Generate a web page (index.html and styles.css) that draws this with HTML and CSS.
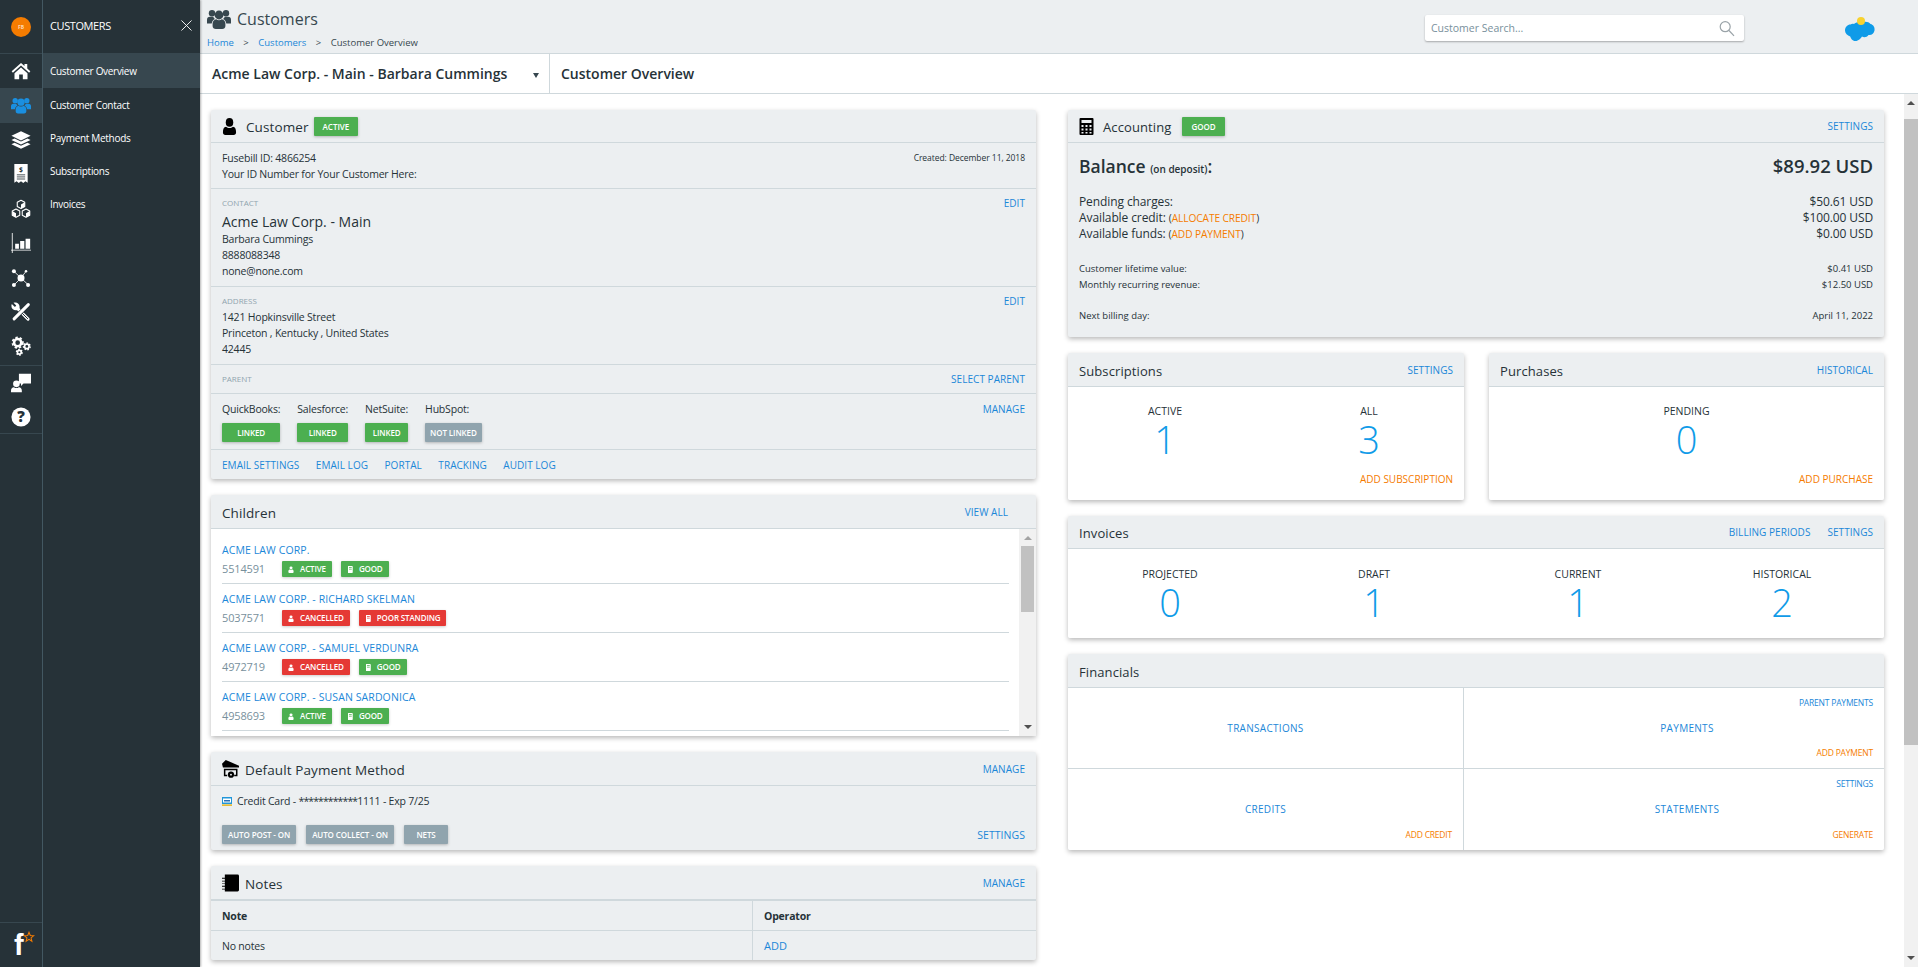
FILE: index.html
```html
<!DOCTYPE html>
<html lang="en">
<head>
<meta charset="utf-8">
<title>Customer Overview</title>
<link rel="stylesheet" href="styles.css">
</head>
<body>
<svg class="defs" width="0" height="0" aria-hidden="true">
  <symbol id="i-users" viewBox="0 0 24 20">
    <circle cx="5" cy="4.2" r="3.2"/><circle cx="19" cy="4.2" r="3.2"/><circle cx="12" cy="6" r="4.4"/>
    <path d="M0 14.5V11c0-2 1-3.2 3-3.2h3.2c.5.9 1 1.6 1.7 2.2-1.8.9-2.9 2.5-3.2 4.5zM24 14.5V11c0-2-1-3.2-3-3.2h-3.2c-.5.9-1 1.6-1.7 2.2 1.8.9 2.9 2.5 3.2 4.5z"/>
    <path d="M5.6 17v-2.2c0-2.6 1.6-4.3 3.6-4.6.8.7 1.8 1.1 2.8 1.1s2-.4 2.8-1.1c2 .3 3.6 2 3.6 4.6V17c0 1.8-1.4 3-3.2 3H8.800c-1.800 0-3.200-1.200-3.200-3z"/>
  </symbol>
  <symbol id="i-user" viewBox="0 0 16 18">
    <ellipse cx="8" cy="4.600" rx="4" ry="4.600"/>
    <path d="M1 15.500c0-3.600.8-6 3.300-6.300C5.300 10 6.600 10.500 8 10.500s2.700-.5 3.700-1.300c2.500.3 3.300 2.700 3.300 6.300 0 1.500-1 2.500-2.600 2.500H3.600C2 18 1 17 1 15.500z"/>
  </symbol>
  <symbol id="i-book" viewBox="0 0 12 14">
    <path fill-rule="evenodd" d="M2 0h8a1.500 1.500 0 0 1 1.500 1.500v11A1.500 1.500 0 0 1 10 14H2zM4 2.500v1.500h5.500V2.500zM4 5.500V7h5.500V5.500z"/>
  </symbol>
</svg>

<div class="app">
  <nav class="rail">
    <div class="rail-logo"><span class="logo-dot">FB</span></div>
    <div class="rail-group">
      <a class="rail-item"><svg class="ri" viewBox="0 0 24 24"><path d="M12 2.500.8 12.300l1.500 1.700L12 5.500l9.700 8.500 1.500-1.700L19.500 9V3.500h-3.300v2.600zM4.200 14.600V22h5.600v-5.800h4.400V22h5.600v-7.400L12 7.700z"/></svg></a>
      <a class="rail-item is-active"><svg class="ri ri-blue" viewBox="0 0 24 20"><use href="#i-users"/></svg></a>
      <a class="rail-item"><svg class="ri" viewBox="0 0 24 24"><path d="M12 1.500 23.500 7 12 12.500.5 7zM4.300 10.200.5 12 12 17.500 23.500 12l-3.800-1.800L12 13.900zM4.300 15.200.5 17 12 22.500 23.500 17l-3.800-1.800L12 18.900z"/></svg></a>
      <a class="rail-item"><svg class="ri" viewBox="0 0 24 24"><path d="M4 0h16v22.500l-2.700-1.700-2.600 1.900-2.700-1.900-2.700 1.900-2.600-1.900L4 22.500z"/><text class="receipt-sign" x="12" y="9.500">$</text><path class="dark-stroke" d="M7 13h10M7 15.500h10M7 18h10"/></svg></a>
      <a class="rail-item"><svg class="ri" viewBox="0 0 24 24"><path class="cube" d="M12 1.500 16.500 4v5L12 11.500 7.500 9V4z"/><path d="M12 6.500 16.500 4v5L12 11.500z"/><path class="cube" d="M6 12 10.500 14.500v5L6 22 1.500 19.500v-5z"/><path d="M1.500 14.500 6 17v5l-4.500-2.500z"/><path class="cube" d="M18 12 22.500 14.500v5L18 22 13.500 19.500v-5z"/><path d="M18 17l4.500-2.500v5L18 22z"/></svg></a>
      <a class="rail-item"><svg class="ri" viewBox="0 0 24 24"><path d="M1 0h1v20h22v1H2v3H1v-3H0v-1h1z"/><path d="M5 13h4.500v6H5zM11 9.500h5V19h-5zM17.500 7H23v12h-5.500z"/></svg></a>
      <a class="rail-item"><svg class="ri" viewBox="0 0 24 24"><path class="line-white" d="M12 12 3.500 4M12 12l6-8M12 12l-8 8M12 12l8.500 8"/><circle cx="12" cy="12" r="4.200"/><circle cx="3.500" cy="4" r="2.400"/><circle cx="18" cy="4" r="1.500"/><circle cx="3.500" cy="20.500" r="2.400"/><circle cx="20.500" cy="20.500" r="2.400"/></svg></a>
      <a class="rail-item"><svg class="ri" viewBox="0 0 24 24"><path d="M1 2.500 4.700 6 6.300 4.300 3 1C6.500-.5 10.800 1.800 10.300 6.500L9.500 9 6.800 10C2 10.500-.7 6.200 1 2.500z"/><path class="tool-bar" d="M8 8 20.500 20.500"/><path class="tool-inner" d="M13 13 20.300 20.300"/><path class="tool-gap" d="M21 3 3.500 20.500"/><path class="tool-blade" d="M20.800 3.200 3.700 20.300"/></svg></a>
      <a class="rail-item"><svg class="ri" viewBox="0 0 24 24"><circle class="gear-ring" cx="8" cy="8" r="4.300"/><circle class="gear-teeth" cx="8" cy="8" r="6.300"/><circle class="gear-ring-sm" cx="19" cy="12.500" r="2.700"/><circle class="gear-teeth-sm" cx="19" cy="12.500" r="4.100"/><circle class="gear-ring-sm" cx="10" cy="19.500" r="2.300"/><circle class="gear-teeth-sm" cx="10" cy="19.500" r="3.500"/></svg></a>
    </div>
    <div class="rail-group rail-group-help">
      <a class="rail-item"><svg class="ri" viewBox="0 0 24 24"><path d="M9.500 1h14.500v11.500h-9L12 15.500v-3H9.500z"/><circle cx="6.500" cy="13" r="4"/><path d="M0 23v-1.700c0-2.700 1.500-4.300 3.500-4.300 1 .7 2 1 3 1s2-.3 3-1c2 0 3.500 1.600 3.500 4.300V23z"/></svg></a>
      <a class="rail-item"><svg class="ri" viewBox="0 0 24 24"><circle cx="12" cy="12" r="11.500"/><text class="help-q" x="12" y="18.500">?</text></svg></a>
    </div>
    <div class="rail-brand">
      <span class="brand-f">f</span>
      <svg class="brand-star" viewBox="0 0 14 14"><path d="M7 1.500 8.500 5.300l4 .2-3.100 2.600 1 3.900L7 9.800 3.600 12l1-3.900L1.500 5.500l4-.2z"/></svg>
    </div>
  </nav>

  <aside class="panel">
    <div class="panel-head"><span>CUSTOMERS</span>
      <svg class="panel-close" viewBox="0 0 12 12"><path d="M.5.500l11 11M11.500.500l-11 11"/></svg>
    </div>
    <a class="panel-item is-active">Customer Overview</a>
    <a class="panel-item">Customer Contact</a>
    <a class="panel-item">Payment Methods</a>
    <a class="panel-item">Subscriptions</a>
    <a class="panel-item">Invoices</a>
  </aside>

  <div class="main">
    <header class="topbar">
      <div class="crumbs-block">
        <div class="page-title"><svg class="title-icon" viewBox="0 0 24 20"><use href="#i-users"/></svg><span>Customers</span></div>
        <div class="crumbs"><a>Home</a><span class="sep">&gt;</span><a>Customers</a><span class="sep">&gt;</span><span>Customer Overview</span></div>
      </div>
      <div class="search"><span>Customer Search...</span>
        <svg class="search-icon" viewBox="0 0 16 16"><circle cx="6.200" cy="6.200" r="5"/><path d="m10 10 5 5.300"/></svg>
      </div>
      <svg class="cloud" viewBox="0 0 30 24"><path class="cloud-blue" d="M9 7c2-2 5-2.500 7.500-1 3-2 7-1.500 9 1 3 .7 4.500 3.500 4 6.500-.4 3-3 5-6 4.500-1.500 2.200-4.500 3-6.500 1.500-1.200 1.700-3.500 4.500-6.500 4.500-3.500 0-4.500-2.800-5.300-4.500C2.500 18.500 0 16.500 0 13.500 0 9.800 3 7.300 5.500 7.500 6.700 6.500 8 6.500 9 7z"/><circle class="cloud-sun" cx="16" cy="4" r="4"/></svg>
    </header>

    <div class="subbar">
      <div class="cust-select"><span>Acme Law Corp. - Main - Barbara Cummings</span><i class="caret"></i></div>
      <div class="sub-title">Customer Overview</div>
    </div>

    <div class="body-row">
      <div class="content">
        <div class="column col-l">
          <section class="card">
            <div class="card-head"><div class="head-left">
              <svg class="head-icon" viewBox="0 0 16 18"><use href="#i-user"/></svg>
              <h2>Customer</h2><span class="tag tag-green">ACTIVE</span></div></div>
            <div class="sec sec-id">
              <div class="between"><span>Fusebill ID: 4866254</span><span class="created">Created: December 11, 2018</span></div>
              <div>Your ID Number for Your Customer Here:</div>
            </div>
            <div class="sec sec-contact">
              <div class="between"><span class="eyebrow">CONTACT</span><a class="link">EDIT</a></div>
              <div class="contact-name">Acme Law Corp. - Main</div>
              <div>Barbara Cummings</div><div>8888088348</div><div>none@none.com</div>
            </div>
            <div class="sec sec-address">
              <div class="between"><span class="eyebrow">ADDRESS</span><a class="link">EDIT</a></div>
              <div>1421 Hopkinsville Street</div><div>Princeton , Kentucky , United States</div><div>42445</div>
            </div>
            <div class="sec sec-row between"><span class="eyebrow">PARENT</span><a class="link">SELECT PARENT</a></div>
            <div class="sec sec-int between">
              <div class="int-list">
                <div class="int"><span>QuickBooks:</span><span class="pill pill-green">LINKED</span></div>
                <div class="int"><span>Salesforce:</span><span class="pill pill-green">LINKED</span></div>
                <div class="int"><span>NetSuite:</span><span class="pill pill-green">LINKED</span></div>
                <div class="int"><span>HubSpot:</span><span class="pill pill-grey">NOT LINKED</span></div>
              </div>
              <a class="link">MANAGE</a>
            </div>
            <div class="sec-links"><a class="link">EMAIL SETTINGS</a><a class="link">EMAIL LOG</a><a class="link">PORTAL</a><a class="link">TRACKING</a><a class="link">AUDIT LOG</a></div>
          </section>

          <section class="card">
            <div class="card-head card-head-children"><h2>Children</h2><a class="link">VIEW ALL</a></div>
            <div class="child-wrap">
              <ul class="children">
                <li><a class="child-name">ACME LAW CORP.</a><div class="child-meta"><span class="child-id">5514591</span>
                  <span class="mini mini-green"><svg viewBox="0 0 16 18"><use href="#i-user"/></svg>ACTIVE</span>
                  <span class="mini mini-green"><svg viewBox="0 0 12 14"><use href="#i-book"/></svg>GOOD</span></div></li>
                <li><a class="child-name">ACME LAW CORP. - RICHARD SKELMAN</a><div class="child-meta"><span class="child-id">5037571</span>
                  <span class="mini mini-red"><svg viewBox="0 0 16 18"><use href="#i-user"/></svg>CANCELLED</span>
                  <span class="mini mini-red"><svg viewBox="0 0 12 14"><use href="#i-book"/></svg>POOR STANDING</span></div></li>
                <li><a class="child-name">ACME LAW CORP. - SAMUEL VERDUNRA</a><div class="child-meta"><span class="child-id">4972719</span>
                  <span class="mini mini-red"><svg viewBox="0 0 16 18"><use href="#i-user"/></svg>CANCELLED</span>
                  <span class="mini mini-green"><svg viewBox="0 0 12 14"><use href="#i-book"/></svg>GOOD</span></div></li>
                <li><a class="child-name">ACME LAW CORP. - SUSAN SARDONICA</a><div class="child-meta"><span class="child-id">4958693</span>
                  <span class="mini mini-green"><svg viewBox="0 0 16 18"><use href="#i-user"/></svg>ACTIVE</span>
                  <span class="mini mini-green"><svg viewBox="0 0 12 14"><use href="#i-book"/></svg>GOOD</span></div></li>
              </ul>
              <div class="sbar sbar-child"><i class="arrow-up"></i><b class="thumb thumb-child"></b><i class="arrow-down"></i></div>
            </div>
          </section>

          <section class="card">
            <div class="card-head card-head-pay"><div class="head-left">
              <svg class="head-icon head-icon-wide" viewBox="0 0 18 19"><path d="M4 0 18 6v2H1L0 4z"/><path class="bank-frame" d="M5.500 16.500H2.800V10h12.800v6.500h-2.700"/><circle cx="9.500" cy="15.500" r="3.300"/><circle class="bank-hole" cx="9.500" cy="15.500" r="1"/></svg>
              <h2>Default Payment Method</h2></div><a class="link">MANAGE</a></div>
            <div class="pay-body">
              <div class="pay-line"><svg class="card-icon" viewBox="0 0 10 9"><rect width="10" height="7" fill="#2196d9"/><rect y="1.500" x="1" width="8" height="4" fill="#fff"/><rect y="3" x="2" width="6" height="1.500" fill="#2a6fb5"/><rect y="7.300" width="10" height="1.700" fill="#e6bd3a"/></svg><span>Credit Card - <span class="stars">************</span>1111 - Exp 7/25</span></div>
              <div class="between pay-foot">
                <div class="pay-btns"><span class="pill pill-grey">AUTO POST - ON</span><span class="pill pill-grey">AUTO COLLECT - ON</span><span class="pill pill-grey pill-nets">NETS</span></div>
                <a class="link link-lg">SETTINGS</a>
              </div>
            </div>
          </section>

          <section class="card">
            <div class="card-head card-head-notes"><div class="head-left">
              <svg class="head-icon head-icon-wide" viewBox="0 0 18 18"><path fill-rule="evenodd" d="M3 0h13.500A1.500 1.500 0 0 1 18 1.500v15a1.500 1.500 0 0 1-1.500 1.500H3v-2H0v-1h3v-2H0v-1h3v-2H0V9.500h3v-2H0v-1h3v-2H0v-1h3z"/></svg>
              <h2>Notes</h2></div><a class="link">MANAGE</a></div>
            <div class="notes-grid">
              <div class="nh">Note</div><div class="nh nh-op">Operator</div>
              <div class="nc">No notes</div><div class="nc nc-op"><a class="link link-add">ADD</a></div>
            </div>
          </section>
        </div>

        <div class="column col-r">
          <section class="card">
            <div class="card-head"><div class="head-left">
              <svg class="head-icon" viewBox="0 0 14 17"><path fill-rule="evenodd" d="M1 0h12a1 1 0 0 1 1 1v15a1 1 0 0 1-1 1H1a1 1 0 0 1-1-1V1a1 1 0 0 1 1-1zM2 2v3h10V2zM2 7v2h2V7zM6 7v2h2V7zM10 7v2h2V7zM2 10.500v2h2v-2zM6 10.500v2h2v-2zM10 10.500v2h2v-2zM2 14v1.500h2V14zM6 14v1.500h2V14zM10 14v1.500h2V14z"/></svg>
              <h2>Accounting</h2><span class="tag tag-green">GOOD</span></div><a class="link">SETTINGS</a></div>
            <div class="acct">
              <div class="between balance"><span>Balance <small>(on deposit)</small>:</span><span class="balance-value">$89.92 USD</span></div>
              <div class="acct-main">
                <div class="between"><span>Pending charges:</span><span>$50.61 USD</span></div>
                <div class="between"><span>Available credit: <em>(<a>ALLOCATE CREDIT</a>)</em></span><span>$100.00 USD</span></div>
                <div class="between"><span>Available funds: <em>(<a>ADD PAYMENT</a>)</em></span><span>$0.00 USD</span></div>
              </div>
              <div class="acct-small acct-gap1">
                <div class="between"><span>Customer lifetime value:</span><span>$0.41 USD</span></div>
                <div class="between"><span>Monthly recurring revenue:</span><span>$12.50 USD</span></div>
              </div>
              <div class="acct-small acct-gap2">
                <div class="between"><span>Next billing day:</span><span>April 11, 2022</span></div>
              </div>
            </div>
          </section>

          <div class="two-up">
            <section class="card">
              <div class="card-head card-head-tall"><h2>Subscriptions</h2><a class="link">SETTINGS</a></div>
              <div class="stat-body">
                <div class="stats stats-wide">
                  <div class="stat"><span>ACTIVE</span><strong>1</strong></div>
                  <div class="stat"><span>ALL</span><strong>3</strong></div>
                </div>
                <div class="add-row"><a class="add">ADD SUBSCRIPTION</a></div>
              </div>
            </section>
            <section class="card">
              <div class="card-head card-head-tall"><h2>Purchases</h2><a class="link">HISTORICAL</a></div>
              <div class="stat-body">
                <div class="stats"><div class="stat"><span>PENDING</span><strong>0</strong></div></div>
                <div class="add-row"><a class="add">ADD PURCHASE</a></div>
              </div>
            </section>
          </div>

          <section class="card">
            <div class="card-head"><h2>Invoices</h2><div class="head-links"><a class="link">BILLING PERIODS</a><a class="link">SETTINGS</a></div></div>
            <div class="stat-body stat-body-inv">
              <div class="stats stats-four">
                <div class="stat"><span>PROJECTED</span><strong>0</strong></div>
                <div class="stat"><span>DRAFT</span><strong>1</strong></div>
                <div class="stat"><span>CURRENT</span><strong>1</strong></div>
                <div class="stat"><span>HISTORICAL</span><strong>2</strong></div>
              </div>
            </div>
          </section>

          <section class="card">
            <div class="card-head card-head-tall"><h2>Financials</h2></div>
            <div class="fin">
              <div class="fin-cell"><span></span><a class="link fin-main">TRANSACTIONS</a><span></span></div>
              <div class="fin-cell"><a class="link fin-corner">PARENT PAYMENTS</a><a class="link fin-main">PAYMENTS</a><a class="add fin-corner">ADD PAYMENT</a></div>
              <div class="fin-cell"><span></span><a class="link fin-main">CREDITS</a><a class="add fin-corner">ADD CREDIT</a></div>
              <div class="fin-cell"><a class="link fin-corner">SETTINGS</a><a class="link fin-main">STATEMENTS</a><a class="add fin-corner">GENERATE</a></div>
            </div>
          </section>
        </div>
      </div>
      <div class="sbar sbar-page"><i class="arrow-up"></i><b class="thumb thumb-page"></b><i class="arrow-down"></i></div>
    </div>
  </div>
</div>
</body>
</html>
```

FILE: styles.css
```css
* { box-sizing: border-box; }
html, body { margin: 0; height: 100%; overflow: hidden; }
body { font-family: "Open Sans", "Noto Sans", sans-serif; font-size: 11px; line-height: 16px; color: #263238; background: #fff; }
a { color: inherit; text-decoration: none; }
h2 { margin: 0; padding-top: 2px; font-size: 13.500px; font-weight: 400; letter-spacing: .1px; }
ul { list-style: none; margin: 0; padding: 0; }
.defs { position: absolute; }

.app { display: flex; height: 967px; }

/* rail */
.rail { width: 43px; flex: none; background: #263238; border-right: 1px solid #455a64; display: flex; flex-direction: column; }
.rail-logo { height: 54px; flex: none; border-bottom: 1px solid #37474f; display: flex; align-items: center; justify-content: center; }
.logo-dot { width: 20px; height: 20px; border-radius: 50%; background: #f57c00; color: #ffd9b0; font-size: 5px; font-weight: 700; line-height: 20px; text-align: center; }
.rail-group { flex: none; }
.rail-group-help { border-top: 1px solid #37474f; border-bottom: 1px solid #37474f; height: 69px; margin-top: 1px; }
.rail-item { height: 34.400px; display: flex; align-items: center; justify-content: center; }
.rail-item.is-active { background: #37474f; }
.ri { width: 20px; height: 20px; fill: #fff; }
.ri-blue { fill: #1a8fe0; height: 17px; }
.receipt-sign { font: 700 8px "Open Sans", sans-serif; fill: #263238; text-anchor: middle; }
.dark-stroke { stroke: #263238; stroke-width: 1; fill: none; }
.cube { fill: #263238; stroke: #fff; stroke-width: 1.300; stroke-linejoin: round; }
.line-white { stroke: #fff; stroke-width: 1; fill: none; }
.tool-bar { stroke: #fff; stroke-width: 3.600; stroke-linecap: round; fill: none; }
.tool-inner { stroke: #263238; stroke-width: 1.200; fill: none; }
.tool-gap { stroke: #263238; stroke-width: 5.400; fill: none; }
.tool-blade { stroke: #fff; stroke-width: 3.600; stroke-linecap: round; fill: none; }
.gear-ring { fill: none; stroke: #fff; stroke-width: 3; }
.gear-teeth { fill: none; stroke: #fff; stroke-width: 2; stroke-dasharray: 2.800 2.450; }
.gear-ring-sm { fill: none; stroke: #fff; stroke-width: 2; }
.gear-teeth-sm { fill: none; stroke: #fff; stroke-width: 1.500; stroke-dasharray: 2 1.650; }
.help-q { font: 800 18px "Open Sans", sans-serif; fill: #263238; text-anchor: middle; }
.rail-brand { margin-top: auto; height: 45px; border-top: 1px solid #37474f; position: relative; }
.brand-f { position: absolute; left: 14px; top: 5px; font: 700 29px/34px "Liberation Sans", sans-serif; color: #fff; }
.brand-star { position: absolute; left: 23px; top: 8px; width: 12px; height: 12px; fill: none; stroke: #f57c00; stroke-width: 1.200; }

/* panel */
.panel { width: 157px; flex: none; background: #263238; color: #fff; box-shadow: 1px 0 2px rgba(0,0,0,.3); position: relative; z-index: 2; }
.panel-head { height: 54px; border-bottom: 1px solid #37474f; padding: 0 8px 2px 7px; display: flex; align-items: center; justify-content: space-between; font-size: 11px; letter-spacing: -.4px; }
.panel-close { width: 11px; height: 11px; stroke: #fff; fill: none; stroke-width: 1; }
.panel-item { display: flex; align-items: center; height: 33px; padding-left: 7px; font-size: 10px; letter-spacing: -.3px; }
.panel-item.is-active { background: #37474f; height: 34px; }

/* main */
.main { flex: 1; min-width: 0; display: flex; flex-direction: column; }
.topbar { height: 54px; flex: none; background: #eceff1; border-bottom: 1px solid #cfd8dc; padding: 0 43px 0 7px; display: flex; align-items: flex-start; }
.crumbs-block { flex: 1; }
.page-title { display: flex; align-items: center; height: 21px; margin-top: 8px; font-size: 16px; color: #37474f; }
.title-icon { width: 24px; height: 20px; margin-right: 6px; fill: #37474f; }
.crumbs { margin-top: 6px; font-size: 9.500px; color: #37474f; line-height: 16px; }
.crumbs a { color: #1b87d8; }
.crumbs .sep { margin: 0 9.500px; }
.search { width: 319px; height: 26px; margin-top: 15px; background: #fff; border-radius: 2px; box-shadow: 0 1px 2px rgba(0,0,0,.3); padding: 0 6px; display: flex; align-items: center; justify-content: space-between; color: #78909c; font-size: 10.500px; }
.search-icon { width: 16px; height: 17px; fill: none; stroke: #9aa3a8; stroke-width: 1.200; margin-right: 3px; }
.cloud { width: 30px; height: 24px; margin: 17px 0 0 101px; }
.cloud-blue { fill: #0f9be8; }
.cloud-sun { fill: #f8d22f; }

.subbar { height: 40px; flex: none; border-bottom: 1px solid #cfd8dc; display: flex; align-items: center; font-weight: 600; font-size: 14px; color: #263238; }
.cust-select { width: 350px; height: 100%; padding: 0 10px 0 12px; border-right: 1px solid #cfd8dc; display: flex; align-items: center; justify-content: space-between; }
.caret { width: 0; height: 0; border-left: 3.500px solid transparent; border-right: 3.500px solid transparent; border-top: 5px solid #37474f; margin-top: 3px; }
.sub-title { padding-left: 11px; }

.body-row { flex: 1; min-height: 0; display: flex; }
.content { flex: 1; min-width: 0; padding: 16px 20px 0 11px; display: grid; grid-template-columns: 825px 816px; column-gap: 32px; align-items: start; }
.column { display: flex; flex-direction: column; gap: 16px; }
.col-l { font-size: 10.500px; letter-spacing: -.2px; }
.col-r h2 { font-size: 13px; }
.col-r .tag { margin-left: 11px; padding: 0 9px; }

/* scrollbars */
.sbar { background: #f1f1f1; display: flex; flex-direction: column; align-items: center; }
.sbar-page { width: 14px; flex: none; }
.sbar-child { width: 17px; flex: none; }
.arrow-up { width: 0; height: 0; margin-top: 7px; border-left: 4px solid transparent; border-right: 4px solid transparent; border-bottom: 4px solid #a3a3a3; }
.arrow-down { width: 0; height: 0; margin-top: auto; margin-bottom: 7px; border-left: 4px solid transparent; border-right: 4px solid transparent; border-top: 4px solid #505050; }
.sbar-page .arrow-up { border-bottom-color: #505050; }
.thumb { display: block; background: #c1c1c1; width: 100%; }
.thumb-page { height: 626px; margin-top: 14px; }
.thumb-child { height: 66px; width: 13px; margin-top: 6px; }

/* cards */
.card { background: #eceff1; border-radius: 2px; box-shadow: 0 2px 5px rgba(0,0,0,.28); }
.card-head { height: 33px; padding: 0 11px; border-bottom: 1px solid #cfd8dc; display: flex; align-items: center; justify-content: space-between; }
.card-head-children { height: 34px; padding-right: 28px; }
.card-head-pay, .card-head-tall { height: 34px; }
.card-head-notes { height: 35px; border-bottom-width: 2px; }
.head-left { display: flex; align-items: center; }
.head-icon { width: 15px; height: 17px; margin-right: 9px; fill: #000; }
.head-icon-wide { width: 17px; height: 18px; margin-right: 6px; }
.bank-frame { fill: none; stroke: #000; stroke-width: 1.600; }
.bank-hole { fill: #eceff1; }
.head-links { display: flex; gap: 17px; }
.tag { margin-left: 5px; height: 19px; padding: 0 9px; font-size: 8px; font-weight: 600; line-height: 19px; letter-spacing: 0; color: #fff; border-radius: 1px; box-shadow: 0 1px 3px rgba(0,0,0,.25); }
.tag-green { background: #4caf50; }
.link { color: #1b87d8; font-size: 10px; letter-spacing: .05px; }
.link-lg { font-size: 10.500px; }
.between { display: flex; justify-content: space-between; }

.sec { padding: 7px 11px; border-bottom: 1px solid #cfd8dc; }
.sec-id { height: 46px; }
.created { font-size: 8.500px; letter-spacing: -.05px; }
.sec-contact { height: 98px; padding-top: 6px; }
.sec-address { height: 78px; padding-top: 6px; }
.eyebrow { font-size: 8px; color: #90a4ae; letter-spacing: 0; }
.contact-name { font-size: 14px; line-height: 22px; margin-bottom: -2px; letter-spacing: 0; }
.sec-row { height: 29px; padding: 0 11px; align-items: center; }
.sec-int { height: 56px; }
.int-list { display: flex; gap: 17px; }
.int { display: flex; flex-direction: column; gap: 6px; }
.pill { display: block; height: 19px; padding: 0 5px; font-size: 8px; font-weight: 600; line-height: 19px; letter-spacing: -.1px; text-align: center; color: #fff; border-radius: 1px; box-shadow: 0 1px 3px rgba(0,0,0,.25); }
.pill-green { background: #4caf50; }
.pill-grey { background: #90a4ae; }
.sec-links { height: 29px; padding: 0 11px; display: flex; align-items: center; gap: 16.500px; }

/* children */
.child-wrap { height: 207px; background: #fff; display: flex; }
.children { flex: 1; min-width: 0; padding: 6px 10px 0 11px; }
.children li { height: 49px; border-bottom: 1px solid #cfd8dc; padding-top: 7px; }
.child-name { display: block; color: #1b87d8; font-size: 10.500px; line-height: 16px; letter-spacing: .1px; }
.child-meta { display: flex; align-items: center; gap: 9px; margin-top: 3px; height: 16px; }
.child-id { width: 51px; color: #78909c; font-size: 11px; letter-spacing: -.15px; }
.mini { display: flex; align-items: center; height: 16px; padding: 0 6px; color: #fff; font-size: 8px; font-weight: 600; letter-spacing: -.15px; border-radius: 1px; box-shadow: 0 1px 3px rgba(0,0,0,.2); }
.mini svg { width: 6px; height: 7px; fill: #fff; margin-right: 6px; }
.mini-green { background: #4caf50; }
.mini-red { background: #e53935; }

/* payment */
.pay-body { height: 64px; padding: 7px 11px 0; }
.pay-line { display: flex; align-items: center; gap: 5px; }
.stars { letter-spacing: -.9px; }
.card-icon { width: 10px; height: 9px; }
.pay-foot { margin-top: 16px; align-items: center; }
.pay-btns { display: flex; gap: 10px; }
.pay-btns .pill { padding: 0 6px; }
.pill-nets { width: 44px; }

/* notes */
.notes-grid { display: grid; grid-template-columns: 541px 1fr; grid-template-rows: 30px 29px; }
.nh, .nc { display: flex; align-items: center; padding-left: 11px; border-bottom: 1px solid #cfd8dc; }
.nh { font-weight: 700; }
.nc { border-bottom: 0; }
.nh-op, .nc-op { border-left: 1px solid #cfd8dc; }
.link-add { font-size: 11px; }

/* accounting */
.acct { height: 194px; padding: 11px 11px 0; font-size: 11px; }
.balance { font-size: 17.500px; font-weight: 600; line-height: 24px; }
.balance small { font-size: 10px; line-height: 1; }
.balance-value { font-size: 18.500px; }
.acct-main { margin-top: 16px; font-size: 12px; letter-spacing: -.1px; }
.acct-main em { font-style: normal; font-size: 10.200px; line-height: 1; }
.acct-main a { color: #f57c00; }
.acct-small { font-size: 9.500px; }
.acct-gap1 { margin-top: 19px; }
.acct-gap2 { margin-top: 15px; }

/* stats */
.two-up { display: grid; grid-template-columns: 396px 395px; gap: 25px; }
.stat-body { background: #fff; height: 113px; padding-top: 16px; border-radius: 0 0 2px 2px; }
.stat-body-inv { height: 89px; padding-top: 17px; }
.stats { display: flex; }
.stats-wide { margin: 0 -7px 0 -5px; }
.stat { flex: 1; display: flex; flex-direction: column; align-items: center; font-size: 10.500px; }
.stat strong { font-size: 38px; line-height: 40px; font-weight: 300; color: #0f9be8; }
.add-row { display: flex; justify-content: flex-end; padding: 12px 11px 0; }
.add { color: #f57c00; font-size: 10px; letter-spacing: 0; }

/* financials */
.fin { display: grid; grid-template-columns: 396px 1fr; background: #fff; border-radius: 0 0 2px 2px; }
.fin-cell { height: 81px; padding: 2px 11px; display: grid; grid-template-rows: 1fr 1fr 1fr; align-items: center; border-bottom: 1px solid #cfd8dc; }
.fin-cell:nth-child(odd) { border-right: 1px solid #cfd8dc; }
.fin-cell:nth-child(even) { padding-left: 37px; }
.fin-cell:nth-child(n+3) { border-bottom: 0; }
.fin-main { justify-self: center; letter-spacing: .3px; }
.fin-corner { justify-self: end; font-size: 8.500px; letter-spacing: -.2px; }
```
